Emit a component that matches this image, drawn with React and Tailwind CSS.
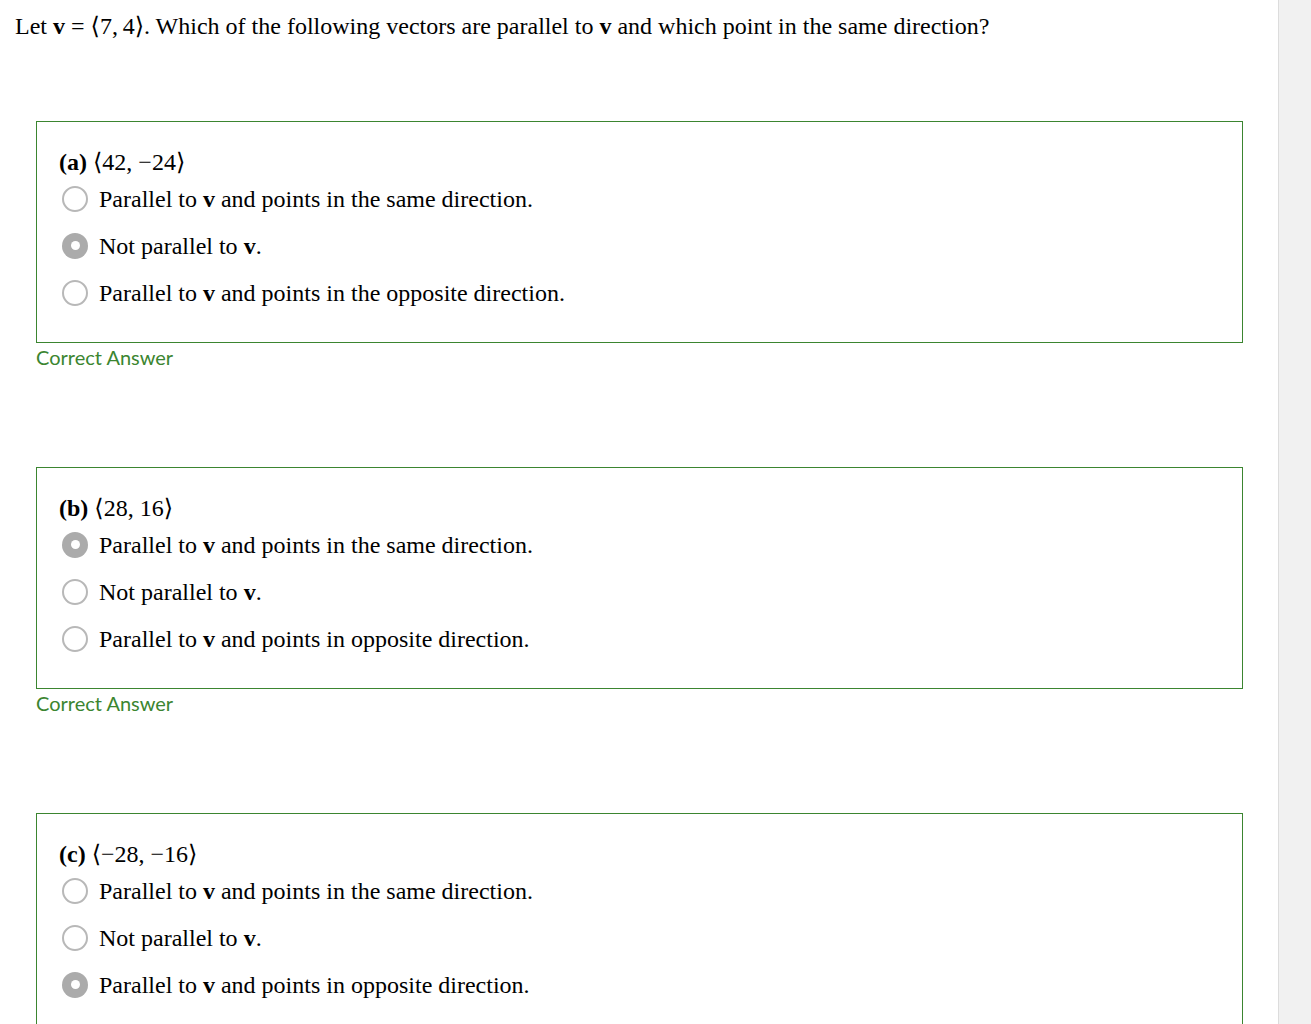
const questions = [
  {
    label: "(a)",
    vec: "⟨42, −24⟩",
    selected: 1,
    options: ["same", "not", "opposite-the"],
  },
  {
    label: "(b)",
    vec: "⟨28, 16⟩",
    selected: 0,
    options: ["same", "not", "opposite"],
  },
  {
    label: "(c)",
    vec: "⟨−28, −16⟩",
    selected: 2,
    options: ["same", "not", "opposite"],
  },
]

function OptionText({ kind }) {
  if (kind === "not") {
    return (
      <span>
        Not parallel to <b>v</b>.
      </span>
    )
  }
  if (kind === "same") {
    return (
      <span>
        Parallel to <b>v</b> and points in the same direction.
      </span>
    )
  }
  if (kind === "opposite-the") {
    return (
      <span>
        Parallel to <b>v</b> and points in the opposite direction.
      </span>
    )
  }
  return (
    <span>
      Parallel to <b>v</b> and points in opposite direction.
    </span>
  )
}

function Radio({ checked }) {
  if (checked) {
    return (
      <span className="w-[26px] h-[26px] rounded-full bg-[#ababab] flex items-center justify-center shrink-0">
        <span className="w-[9px] h-[9px] rounded-full bg-white" />
      </span>
    )
  }
  return <span className="w-[26px] h-[26px] rounded-full border-2 border-[#b8b8b8] bg-white shrink-0" />
}

function Question({ q }) {
  return (
    <div>
      <div className="border border-[#3b8530] pl-[22px] pt-[27px] pb-[26px]">
        <div className="h-[26px] leading-[26px] text-[24px]">
          <b>{q.label}</b> {q.vec}
        </div>
        {q.options.map((opt, i) => (
          <div key={i} className="h-[47px] flex items-center pl-[3px] gap-[11px] text-[24px]">
            <Radio checked={q.selected === i} />
            <OptionText kind={opt} />
          </div>
        ))}
      </div>
      <div
        className="mt-[2px] text-[20px] leading-[24px] text-[#3b8530]"
        style={{ fontFamily: "Lato, 'Open Sans', sans-serif" }}
      >
        Correct Answer
      </div>
    </div>
  )
}

export default function App() {
  return (
    <div className="flex min-h-[1024px] bg-white text-black" style={{ fontFamily: "'Liberation Serif', 'DejaVu Serif', serif" }}>
      <main className="flex-1 pl-[15px] pt-[11px]">
        <p className="text-[24px] leading-[30px]">
          Let <b>v</b> = ⟨7,&#8201;4⟩. Which of the following vectors are parallel to <b>v</b> and which point in the same direction?
        </p>
        <div className="pl-[21px] pr-[35px] mt-[80px] flex flex-col gap-[98px]">
          {questions.map((q, i) => (
            <Question key={i} q={q} />
          ))}
        </div>
      </main>
      <aside className="w-[33px] bg-[#f1f1f1] border-l border-[#dcdcdc]" />
    </div>
  )
}
